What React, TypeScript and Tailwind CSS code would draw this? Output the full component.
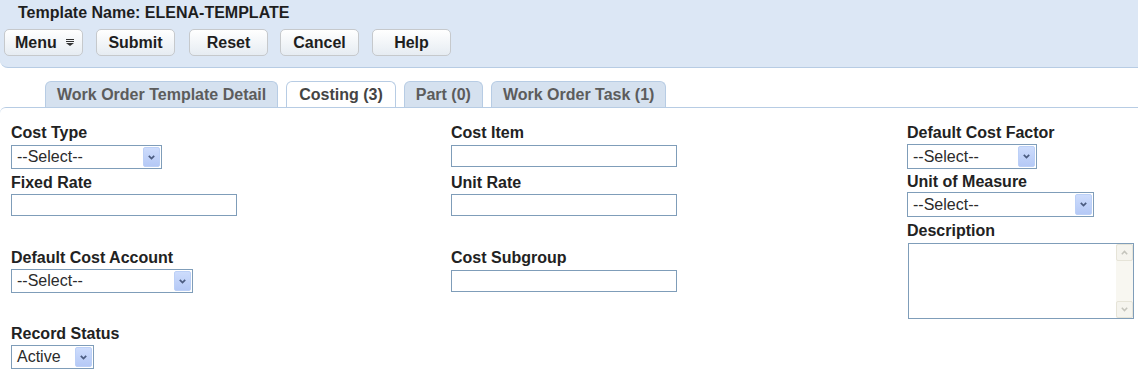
import React from "react";

const Select = ({ value, className }: { value: string; className: string }) => (
  <div className={`flex items-stretch border border-[#7f9db9] bg-white ${className}`}>
    <span className="flex flex-1 items-center pl-[5px] text-[16px] text-[#2b2b2b]">{value}</span>
    <span className="m-[1px] flex w-[17px] items-center justify-center rounded-[2px] border border-[#bcd0f7] bg-linear-to-b from-[#cddcfc] to-[#b5c9f6]">
      <svg width="7" height="5" viewBox="0 0 7 5">
        <path d="M0.8 0.8 L3.5 3.6 L6.2 0.8" stroke="#4b5c80" strokeWidth="1.7" fill="none" />
      </svg>
    </span>
  </div>
);

const Input = ({ className }: { className: string }) => (
  <input type="text" className={`block w-[226px] border border-[#7f9db9] bg-white outline-none ${className}`} />
);

const Label = ({ children }: { children: React.ReactNode }) => (
  <div className="h-[18px] text-[16px] font-bold leading-[20px] text-[#222]">{children}</div>
);

const Btn = ({ children, className }: { children: React.ReactNode; className: string }) => (
  <button
    className={`flex h-[27px] w-[79px] items-center justify-center gap-[9px] rounded-[5px] border border-[#c6c9cc] bg-linear-to-b from-white to-[#e6ecf2] text-[16px] font-bold text-[#1e1e1e] ${className}`}
  >
    {children}
  </button>
);

const tabs = [
  { name: "Work Order Template Detail", active: false },
  { name: "Costing (3)", active: true },
  { name: "Part (0)", active: false },
  { name: "Work Order Task (1)", active: false },
];

export default function App() {
  return (
    <div className="h-[374px] w-[1138px] overflow-hidden bg-white font-['Liberation_Sans',Arial,sans-serif]">
      {/* header */}
      <div className="h-[68px] rounded-bl-[8px] border-b border-[#b7cce4] bg-[#dce7f5] pt-[4px]">
        <div className="h-[18px] pl-[18px] text-[16px] font-bold leading-[18px] text-[#1e1e1e]">
          Template Name: ELENA-TEMPLATE
        </div>
        <div className="mt-[7px] flex pl-[4px]">
          <Btn className="justify-start pl-[10px]">
            Menu
            <svg width="8" height="7" viewBox="0 0 8 7">
              <rect x="0" y="0" width="8" height="1" fill="#333" />
              <rect x="0" y="2" width="8" height="1" fill="#333" />
              <polygon points="0,4 8,4 4,7" fill="#333" />
            </svg>
          </Btn>
          <Btn className="ml-[13px]">Submit</Btn>
          <Btn className="ml-[14px] w-[78px]">Reset</Btn>
          <Btn className="ml-[12px]">Cancel</Btn>
          <Btn className="ml-[13px] w-[78px]">Help</Btn>
        </div>
      </div>

      {/* tabs */}
      <div className="mt-[13px] flex gap-[8px] pl-[45px]">
        {tabs.map((t) => (
          <div
            key={t.name}
            className={
              t.active
                ? "flex h-[26px] items-center rounded-t-[6px] border border-b-0 border-[#b7cce4] bg-white px-[12px] text-[16px] font-bold text-[#444]"
                : "flex h-[26px] items-center rounded-t-[6px] border border-b-0 border-[#b7cce4] bg-[#d5e1ef] px-[11px] text-[16px] font-bold text-[#5c5c5c]"
            }
          >
            {t.name}
          </div>
        ))}
      </div>

      {/* content */}
      <div className="flex rounded-tl-[6px] border-t border-[#b7cce4]">
        <div className="w-[451px] pl-[11px] pt-[15px]">
          <Label>Cost Type</Label>
          <Select value="--Select--" className="mt-[4px] h-[24px] w-[151px]" />
          <div className="mt-[4px]">
            <Label>Fixed Rate</Label>
          </div>
          <Input className="mt-[3px] h-[22px]" />
          <div className="mt-[32px]">
            <Label>Default Cost Account</Label>
          </div>
          <Select value="--Select--" className="mt-[3px] h-[24px] w-[182px]" />
          <div className="mt-[31px]">
            <Label>Record Status</Label>
          </div>
          <Select value="Active" className="mt-[3px] h-[24px] w-[83px]" />
        </div>

        <div className="w-[456px] pt-[15px]">
          <Label>Cost Item</Label>
          <Input className="mt-[4px] h-[22px]" />
          <div className="mt-[6px]">
            <Label>Unit Rate</Label>
          </div>
          <Input className="mt-[3px] h-[22px]" />
          <div className="mt-[32px]">
            <Label>Cost Subgroup</Label>
          </div>
          <Input className="mt-[4px] h-[22px]" />
        </div>

        <div className="flex-1 pt-[15px]">
          <Label>Default Cost Factor</Label>
          <Select value="--Select--" className="mt-[3px] h-[25px] w-[130px]" />
          <div className="mt-[3px]">
            <Label>Unit of Measure</Label>
          </div>
          <Select value="--Select--" className="mt-[2px] h-[25px] w-[187px]" />
          <div className="mt-[4px]">
            <Label>Description</Label>
          </div>
          <div className="ml-[1px] mt-[4px] flex h-[76px] w-[226px] justify-end border border-[#7f9db9] bg-white">
            <div className="flex w-[17px] flex-col bg-[#f8f7f1]">
              <div className="flex h-[17px] items-center justify-center rounded-[2px] border border-[#e6e4d8] bg-[#f5f4ee]">
                <svg width="7" height="5" viewBox="0 0 7 5">
                  <path d="M0.8 4.2 L3.5 1.4 L6.2 4.2" stroke="#c4c4bc" strokeWidth="1.5" fill="none" />
                </svg>
              </div>
              <div className="flex-1" />
              <div className="flex h-[17px] items-center justify-center rounded-[2px] border border-[#e6e4d8] bg-[#f5f4ee]">
                <svg width="7" height="5" viewBox="0 0 7 5">
                  <path d="M0.8 0.8 L3.5 3.6 L6.2 0.8" stroke="#c4c4bc" strokeWidth="1.5" fill="none" />
                </svg>
              </div>
            </div>
          </div>
        </div>
      </div>
    </div>
  );
}
